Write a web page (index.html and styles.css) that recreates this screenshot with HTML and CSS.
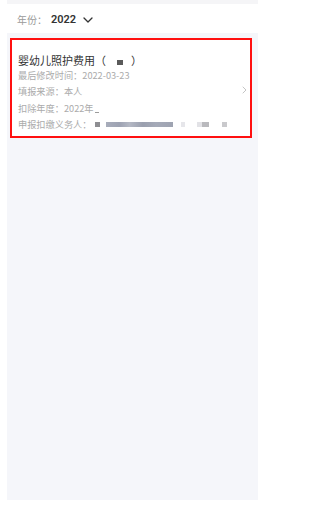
FILE: index.html
```html
<!DOCTYPE html>
<html lang="zh-CN">
<head>
<meta charset="utf-8">
<link rel="stylesheet" href="styles.css">
</head>
<body>
<div class="page">
  <div class="topband"></div>
  <div class="header">
    <span class="year-label">年份：</span>
    <span class="year-value">2022</span>
    <svg class="year-caret" width="10" height="6" viewBox="0 0 10 6"><path d="M1 1 L5 5 L9 1" fill="none" stroke="#333" stroke-width="1.3" stroke-linecap="round" stroke-linejoin="round"/></svg>
  </div>
  <div class="panel">
    <div class="card">
      <div class="card-body">
        <div class="title"><span>婴幼儿照护费用（</span><span class="mask-dark"></span><span>）</span></div>
        <div class="row">最后修改时间：2022-03-23</div>
        <div class="row">填报来源：本人</div>
        <div class="row">扣除年度：2022年<span class="cursor"></span></div>
        <div class="row">申报扣缴义务人：<span class="blur b1"></span><span class="blur b2"></span><span class="blur b3"></span><span class="blur b4"></span><span class="blur b5"></span></div>
      </div>
      <svg class="chev" width="5" height="8" viewBox="0 0 5 8"><path d="M1 1 L4 4 L1 7" fill="none" stroke="#c4c4c4" stroke-width="1" stroke-linecap="round" stroke-linejoin="round"/></svg>
    </div>
  </div>
</div>
</body>
</html>
```

FILE: styles.css
```css
html, body {
  margin: 0;
  padding: 0;
  background: #ffffff;
}
body {
  font-family: "Noto Sans CJK SC", "Noto Sans", sans-serif;
  text-spacing-trim: space-all;
}
.page {
  margin-left: 7px;
  width: 251px;
}
.topband {
  height: 4px;
  background: #f5f5f7;
}
.header {
  height: 27px;
  padding-top: 2px;
  display: flex;
  align-items: center;
  padding-left: 10px;
  background: #ffffff;
}
.year-label {
  font-size: 10px;
  color: #9a9a9a;
  line-height: 12px;
}
.year-value {
  font-size: 11px;
  font-weight: 600;
  color: #333333;
  margin-left: 4px;
  line-height: 12px;
  font-family: "Roboto", "Noto Sans CJK SC", sans-serif;
}
.year-caret {
  margin-left: 7px;
  margin-top: 1px;
}
.panel {
  height: 462px;
  background: #f5f6fa;
  padding: 5px 6px 0 3px;
}
.card {
  background: #ffffff;
  border: 2px solid #ff1010;
  height: 96px;
  display: flex;
  align-items: center;
  padding-left: 6px;
  padding-right: 3px;
}
.card-body {
  flex: 1;
  align-self: flex-start;
  padding-top: 14px;
}
.title {
  font-size: 11px;
  line-height: 13px;
  color: #333333;
  display: flex;
  align-items: center;
  white-space: nowrap;
}
.mask-dark {
  display: inline-block;
  width: 6px;
  height: 5px;
  background: #5a5a5a;
  margin-left: 11px;
  margin-right: 8px;
  margin-top: 3px;
}
.row {
  font-size: 9.2px;
  line-height: 16.3px;
  color: #ababab;
  white-space: nowrap;
  display: flex;
  align-items: center;
}
.cursor {
  display: inline-block;
  width: 4px;
  height: 1px;
  background: #9c9c9c;
  margin-left: 1px;
  margin-top: 9px;
}
.blur {
  display: inline-block;
  height: 5px;
}
.b1 { width: 5px; background: #8e8e92; margin-left: 3px; }
.b2 {
  width: 67px;
  margin-left: 6px;
  background: linear-gradient(90deg, #a8adbb 0%, #9da2b2 20%, #b4b8c4 35%, #9a9fae 55%, #a5aab8 75%, #9ea3b1 100%);
}
.b3 { width: 4px; background: #e6e6ea; margin-left: 8px; }
.b4 {
  width: 12px;
  margin-left: 12px;
  background: linear-gradient(90deg, #e2e2e6 0%, #e2e2e6 40%, #b9b9bd 40%, #b9b9bd 100%);
}
.b5 { width: 5px; background: #c9c9cc; margin-left: 13px; }
.chev {
  margin-top: 4px;
}
```
